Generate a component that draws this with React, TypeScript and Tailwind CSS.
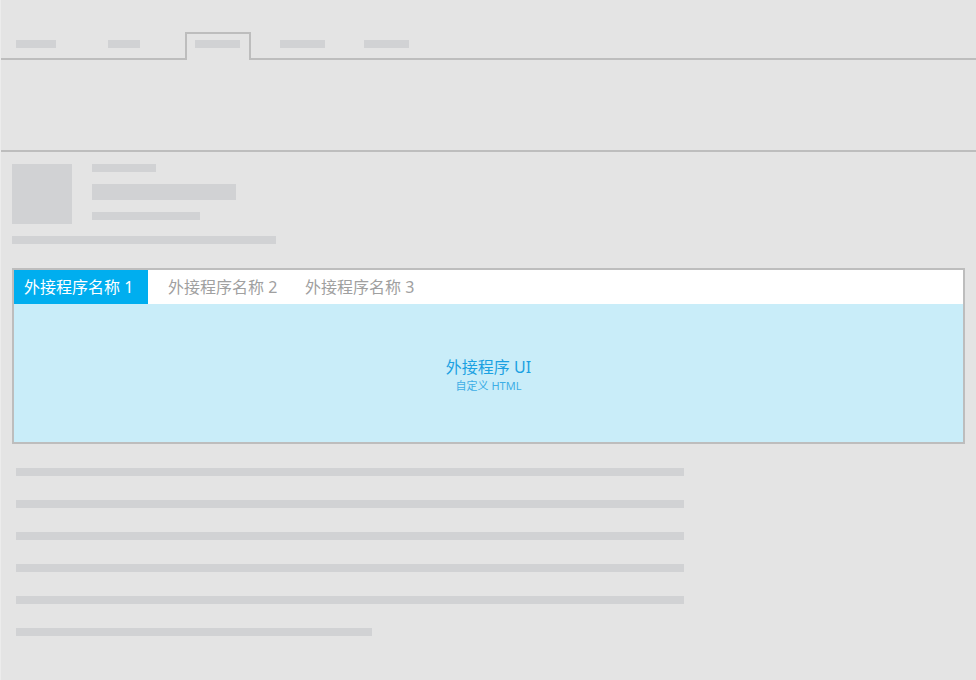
const bar = "bg-[#d1d2d4]";

const bodyLines = [668, 668, 668, 668, 668, 356];

export default function App() {
  return (
    <div
      className="w-[976px] h-[680px] overflow-hidden bg-[#e4e4e4] border-l border-[#ececec]"
      style={{ fontFamily: '"Segoe UI", "Noto Sans", "Noto Sans CJK SC", sans-serif' }}
    >
      {/* --- TOP TAB STRIP --- */}
      <div className="h-[152px] border-b-2 border-[#bdbdbd]">
        <div className="h-[60px] flex items-end">
          <div className="w-[184px] h-[28px] border-b-2 border-[#bdbdbd] flex items-start pt-[8px]">
            <div className={`ml-[15px] w-[40px] h-[8px] ${bar}`} />
            <div className={`ml-[52px] w-[32px] h-[8px] ${bar}`} />
          </div>
          <div className="w-[66px] h-[28px] border-x-2 border-t-2 border-[#bdbdbd] pt-[6px] pl-[8px]">
            <div className={`w-[45px] h-[8px] ${bar}`} />
          </div>
          <div className="flex-1 h-[28px] border-b-2 border-[#bdbdbd] flex items-start pt-[8px]">
            <div className={`ml-[29px] w-[45px] h-[8px] ${bar}`} />
            <div className={`ml-[39px] w-[45px] h-[8px] ${bar}`} />
          </div>
        </div>
      </div>

      {/* --- PAGE CONTENT --- */}
      <div className="px-[11px] pt-[12px]">
        <div className="flex gap-[20px]">
          <div className={`w-[60px] h-[60px] ${bar}`} />
          <div className="flex flex-col gap-[12px]">
            <div className={`w-[64px] h-[8px] ${bar}`} />
            <div className={`w-[144px] h-[16px] ${bar}`} />
            <div className={`w-[108px] h-[8px] ${bar}`} />
          </div>
        </div>
        <div className={`mt-[12px] w-[264px] h-[8px] ${bar}`} />

        {/* add-in pane */}
        <div className="mt-[24px] border-2 border-[#bdbdbd]">
          <div className="h-[34px] bg-white flex items-stretch text-[16px] leading-none whitespace-nowrap">
            <div className="w-[134px] bg-[#00aeef] text-white pl-[10px] flex items-center">外接程序名称 1</div>
            <div className="w-[147px] text-[#a0a0a0] pl-[20px] flex items-center">外接程序名称 2</div>
            <div className="text-[#a0a0a0] pl-[10px] flex items-center">外接程序名称 3</div>
          </div>
          <div className="h-[138px] bg-[#c9edf9] flex flex-col items-center justify-center pt-[4px]">
            <div className="text-[16px] leading-[23px] text-[#1ba1e2]">外接程序 UI</div>
            <div className="text-[11px] leading-[16px] -mt-[1px] text-[#3daee6]">自定义 HTML</div>
          </div>
        </div>

        <div className="mt-[24px] pl-[4px] flex flex-col gap-[24px]">
          {bodyLines.map((w, i) => (
            <div key={i} className={`h-[8px] ${bar}`} style={{ width: w }} />
          ))}
        </div>
      </div>
    </div>
  );
}
